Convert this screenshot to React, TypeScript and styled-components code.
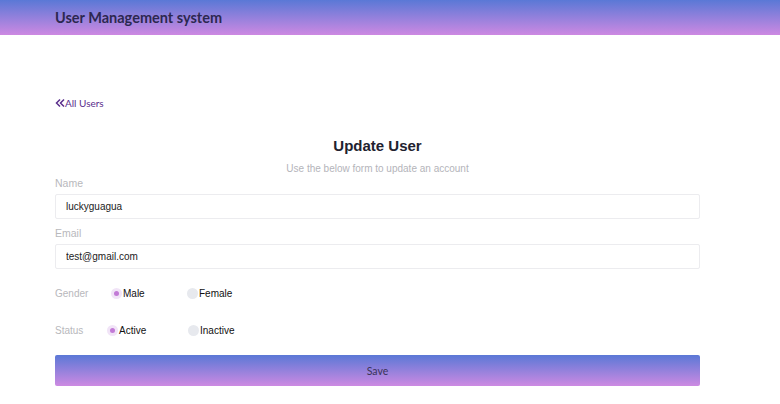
import React, { useState } from "react";
import styled, { createGlobalStyle } from "styled-components";

const Global = createGlobalStyle`
  html, body { margin: 0; padding: 0; background: #fff; }
  body { font-family: "Liberation Sans", Arial, sans-serif; }
  * { box-sizing: border-box; }
`;

const Header = styled.header`
  height: 35px;
  background: linear-gradient(to bottom, #5a78d6, #cd89e2);
  display: flex;
  align-items: center;
  padding: 0 0 1px 55px;
`;

const Brand = styled.h1`
  margin: 0;
  font-family: "Lato", "Noto Sans", sans-serif;
  font-weight: 700;
  font-size: 14.5px;
  color: #2c2850;
`;

const Main = styled.main`
  padding: 61px 80px 0 55px;
  display: flex;
  flex-direction: column;
`;

const BackLink = styled.a`
  display: flex;
  align-items: center;
  font-family: "Lato", "Noto Sans", sans-serif;
  font-size: 10px;
  color: #5a2d8c;
  text-decoration: none;
  height: 14px;
`;

const Heading = styled.div`
  text-align: center;
  margin-top: 26px;
`;

const Title = styled.h2`
  margin: 0;
  font-size: 15px;
  font-weight: 700;
  color: #22222f;
  line-height: 20px;
`;

const Subtitle = styled.p`
  margin: 6px 0 0;
  font-size: 10px;
  color: #b4b4ba;
  line-height: 13px;
`;

const Field = styled.div<{ $top: number }>`
  display: flex;
  flex-direction: column;
  margin-top: ${(p) => p.$top}px;
`;

const Label = styled.label`
  font-size: 10.5px;
  color: #b8b8bc;
  line-height: 13px;
  height: 13px;
`;

const Input = styled.input`
  margin-top: 4px;
  height: 25px;
  border: 1px solid #ececef;
  border-radius: 2px;
  padding: 0 10px;
  font-family: "Liberation Sans", Arial, sans-serif;
  font-size: 10px;
  color: #222;
  outline: none;
`;

const RadioRow = styled.div<{ $top: number }>`
  display: flex;
  align-items: center;
  margin-top: ${(p) => p.$top}px;
  height: 14px;
`;

const RowLabel = styled.span<{ $w: number }>`
  font-size: 10px;
  color: #b8b8bc;
  width: ${(p) => p.$w}px;
`;

const Option = styled.label<{ $w: number }>`
  display: flex;
  align-items: center;
  font-size: 10px;
  color: #111;
  cursor: pointer;
  width: ${(p) => p.$w}px;
`;

const Dot = styled.span<{ $on: boolean }>`
  width: 11px;
  height: 11px;
  border-radius: 50%;
  margin-right: 1px;
  background: ${(p) => (p.$on ? "#f1e4f7" : "#e7e9ee")};
  display: flex;
  align-items: center;
  justify-content: center;
  &::after {
    content: "";
    width: 5px;
    height: 5px;
    border-radius: 50%;
    background: ${(p) => (p.$on ? "#c27ad6" : "transparent")};
  }
`;

const SaveButton = styled.button`
  margin-top: 18px;
  height: 31px;
  width: 100%;
  border: none;
  border-radius: 2px;
  background: linear-gradient(to bottom, #5b78d6, #cd8ae2);
  font-family: "Lato", "Noto Sans", sans-serif;
  font-size: 10.5px;
  color: #3a3358;
  cursor: pointer;
`;

function Radio({ on, text, w, onClick }: { on: boolean; text: string; w: number; onClick: () => void }) {
  return (
    <Option $w={w} onClick={onClick}>
      <Dot $on={on} />
      {text}
    </Option>
  );
}

export default function App() {
  const [gender, setGender] = useState("male");
  const [status, setStatus] = useState("active");
  return (
    <>
      <Global />
      <Header>
        <Brand>User Management system</Brand>
      </Header>
      <Main>
        <BackLink href="#">
          <svg width="10" height="10" viewBox="0 0 10 10" fill="none" stroke="#5a2d8c" strokeWidth="1.5">
            <path d="M5 1.5 L1.5 5 L5 8.5 M9 1.5 L5.5 5 L9 8.5" />
          </svg>
          All Users
        </BackLink>
        <Heading>
          <Title>Update User</Title>
          <Subtitle>Use the below form to update an account</Subtitle>
        </Heading>
        <Field $top={2}>
          <Label>Name</Label>
          <Input defaultValue="luckyguagua" />
        </Field>
        <Field $top={8}>
          <Label>Email</Label>
          <Input defaultValue="test@gmail.com" />
        </Field>
        <RadioRow $top={17}>
          <RowLabel $w={56}>Gender</RowLabel>
          <Radio on={gender === "male"} text="Male" w={76} onClick={() => setGender("male")} />
          <Radio on={gender === "female"} text="Female" w={80} onClick={() => setGender("female")} />
        </RadioRow>
        <RadioRow $top={23}>
          <RowLabel $w={52}>Status</RowLabel>
          <Radio on={status === "active"} text="Active" w={81} onClick={() => setStatus("active")} />
          <Radio on={status === "inactive"} text="Inactive" w={80} onClick={() => setStatus("inactive")} />
        </RadioRow>
        <SaveButton>Save</SaveButton>
      </Main>
    </>
  );
}
